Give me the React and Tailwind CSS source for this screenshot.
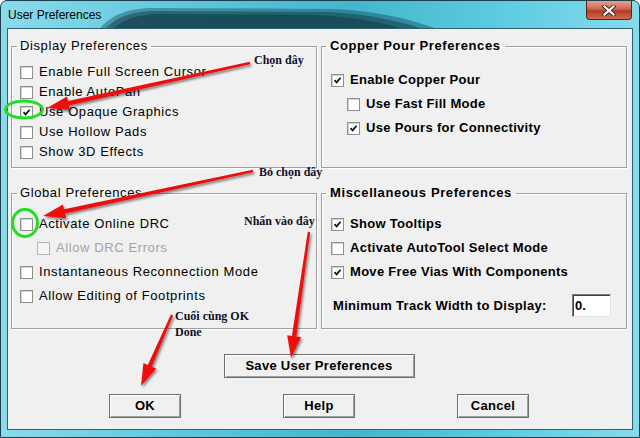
import React from 'react';

function Box({ checked, disabled }) {
  return (
    <span
      className={
        'flex h-[13px] w-[13px] shrink-0 items-center justify-center border ' +
        (disabled
          ? 'border-[#b5b5b5] bg-[#f4f4f4]'
          : 'border-[#8e8f8f] bg-white shadow-[inset_1px_1px_0_#d4d4d4]')
      }
    >
      {checked && (
        <svg width="9" height="9" viewBox="0 0 9 9">
          <path d="M1.5 4.2 L3.6 6.4 L7.6 1.8" fill="none" stroke="#111" strokeWidth="1.7" />
        </svg>
      )}
    </span>
  );
}

function LeftRow({ label, checked, disabled, indent }) {
  return (
    <div className={'flex h-[20px] items-center gap-[6px] ' + (indent ? 'ml-[20px]' : 'ml-[3px]')}>
      <Box checked={checked} disabled={disabled} />
      <span className={'text-[13px] tracking-[0.6px] ' + (disabled ? 'text-[#a3a3a3]' : 'text-black')}>{label}</span>
    </div>
  );
}

function RightRow({ label, checked, indent }) {
  return (
    <div className={'flex h-[24px] items-center gap-[6px] ' + (indent ? 'ml-[21px]' : 'ml-[5px]')}>
      <Box checked={checked} />
      <span className="text-[13px] font-bold tracking-[0.3px]">{label}</span>
    </div>
  );
}

function Group({ title, bold, className, children }) {
  return (
    <fieldset
      className={
        'border border-[#a0a0a0] shadow-[inset_1px_1px_0_#fff,1px_1px_0_#fff] ' +
        (bold ? 'pl-[4px] ' : 'pl-[5px] ') +
        className
      }
    >
      <legend
        className={
          'text-[13px] leading-[14px] ' +
          (bold ? 'px-[4px] font-bold tracking-[0.6px]' : 'px-[3px] tracking-[0.6px]')
        }
      >
        {title}
      </legend>
      {children}
    </fieldset>
  );
}

function Btn({ children, className }) {
  return (
    <button className={'flex h-[24px] items-center justify-center border border-[#6f6f6f] bg-[#f0f0f0] text-[13px] font-bold tracking-[0.3px] shadow-[inset_1px_1px_0_#fff,inset_-1px_-1px_0_#a0a0a0] ' + className}>
      {children}
    </button>
  );
}

function arrow(x1, y1, x2, y2) {
  const dx = x2 - x1;
  const dy = y2 - y1;
  const L = Math.hypot(dx, dy);
  const ux = dx / L;
  const uy = dy / L;
  const nx = -uy;
  const ny = ux;
  const hl = 22;
  const hw = 7;
  const bx = x2 - ux * hl;
  const by = y2 - uy * hl;
  const p = [
    [x1 + nx * 1.2, y1 + ny * 1.2],
    [bx + nx * 2.2, by + ny * 2.2],
    [bx + nx * hw, by + ny * hw],
    [x2, y2],
    [bx - nx * hw, by - ny * hw],
    [bx - nx * 2.2, by - ny * 2.2],
    [x1 - nx * 1.2, y1 - ny * 1.2],
  ];
  return p.map((q) => q[0].toFixed(1) + ',' + q[1].toFixed(1)).join(' ');
}

function Overlay() {
  return (
    <>
      <svg className="pointer-events-none absolute left-0 top-0" width="640" height="438">
        <defs>
          <filter id="sh" x="-20%" y="-20%" width="140%" height="140%">
            <feDropShadow dx="1.5" dy="2" stdDeviation="1.2" floodColor="#000" floodOpacity="0.45" />
          </filter>
        </defs>
        <g fill="#123d49">
          <path d="M100 28 C110 17 124 9 150 8 L335 9 C375 11 405 18 435 28 Z" fillOpacity="0.4" />
          <path d="M106 28 C115 19 128 12 152 11 L328 12 C366 14 395 20 420 28 Z" fillOpacity="0.5" />
          <path d="M114 28 C122 21 134 15 158 14 L318 15 C352 17 378 22 400 28 Z" fillOpacity="0.6" />
        </g>
        <ellipse cx="24" cy="109.5" rx="18.5" ry="8.5" fill="none" stroke="#22dd22" strokeWidth="3" />
        <ellipse cx="25" cy="223" rx="12.5" ry="13.5" fill="none" stroke="#22dd22" strokeWidth="3" />
        <g fill="#ee1111" filter="url(#sh)">
          <polygon points={arrow(250, 63, 47, 108)} />
          <polygon points={arrow(253, 171, 43, 216)} />
          <polygon points={arrow(309, 232, 291, 358)} />
          <polygon points={arrow(172, 315, 141, 386)} />
        </g>
      </svg>
      <div className="pointer-events-none absolute left-[254px] top-[52px] font-['Liberation_Serif',serif] text-[12px] font-bold leading-[16px] text-[#10102a]">Chọn đây</div>
      <div className="pointer-events-none absolute left-[259px] top-[164px] font-['Liberation_Serif',serif] text-[12px] font-bold leading-[16px] text-[#10102a]">Bỏ chọn đây</div>
      <div className="pointer-events-none absolute left-[244px] top-[213px] font-['Liberation_Serif',serif] text-[12px] font-bold leading-[16px] text-[#10102a]">Nhấn vào đây</div>
      <div className="pointer-events-none absolute left-[175px] top-[308px] font-['Liberation_Serif',serif] text-[12px] font-bold leading-[16px] text-[#10102a]">
        Cuối cùng OK
        <br />
        Done
      </div>
    </>
  );
}

export default function App() {
  return (
    <div className="relative h-[438px] w-[640px] overflow-hidden bg-white font-['Liberation_Sans',Arial,sans-serif] text-black">
      <div className="flex h-full w-full flex-col rounded-t-[7px] border border-[#1b3f4b] bg-[linear-gradient(to_right,#8adbea,#5cc6dc_30%,#45b5cd_55%,#5ccbe0_78%,#86dbeb)]">
        <div className="flex h-[27px] items-start justify-between">
          <span className="ml-[7px] mt-[6px] text-[12px] leading-[16px]">User Preferences</span>
          <div className="relative z-10 mr-[7px] flex h-[19px] w-[46px] items-center justify-center rounded-b-[4px] border border-t-0 border-[#5c2219] bg-[linear-gradient(to_bottom,#e4a293,#cf6450_45%,#b63b26_55%,#d36b4e)]">
            <svg width="14" height="11" viewBox="0 0 14 11">
              <path d="M2.5 1.5 L11.5 9.5 M11.5 1.5 L2.5 9.5" stroke="#3a2a28" strokeWidth="4" strokeLinecap="square" />
              <path d="M2.5 1.5 L11.5 9.5 M11.5 1.5 L2.5 9.5" stroke="#fff" strokeWidth="2.2" strokeLinecap="square" />
            </svg>
          </div>
        </div>
        <div className="mx-[6px] mb-[7px] flex flex-1 flex-col border border-[#2d6270] bg-[#f0f0f0] pl-[3px] pr-[5px] pt-[10px]">
          <div className="grid grid-cols-[306px_306px] gap-x-[4px] gap-y-[18px]">
            <Group title="Display Preferences" className="h-[129px]">
              <div className="flex flex-col pt-[9px]">
                <LeftRow label="Enable Full Screen Cursor" />
                <LeftRow label="Enable AutoPan" />
                <LeftRow label="Use Opaque Graphics" checked />
                <LeftRow label="Use Hollow Pads" />
                <LeftRow label="Show 3D Effects" />
              </div>
            </Group>
            <Group title="Copper Pour Preferences" bold className="h-[129px]">
              <div className="flex flex-col pt-[15px]">
                <RightRow label="Enable Copper Pour" checked />
                <RightRow label="Use Fast Fill Mode" indent />
                <RightRow label="Use Pours for Connectivity" checked indent />
              </div>
            </Group>
            <Group title="Global Preferences" className="h-[143px]">
              <div className="flex flex-col pt-[12px]">
                <div className="flex h-[24px] items-center">
                  <LeftRow label="Activate Online DRC" />
                </div>
                <div className="flex h-[24px] items-center">
                  <LeftRow label="Allow DRC Errors" disabled indent />
                </div>
                <div className="flex h-[24px] items-center">
                  <LeftRow label="Instantaneous Reconnection Mode" />
                </div>
                <div className="flex h-[24px] items-center">
                  <LeftRow label="Allow Editing of Footprints" />
                </div>
              </div>
            </Group>
            <Group title="Miscellaneous Preferences" bold className="h-[143px]">
              <div className="flex flex-col pt-[12px]">
                <RightRow label="Show Tooltips" checked />
                <RightRow label="Activate AutoTool Select Mode" />
                <RightRow label="Move Free Vias With Components" checked />
                <div className="ml-[7px] mt-[10px] flex h-[23px] items-center">
                  <span className="w-[239px] text-[13px] font-bold tracking-[0.3px]">Minimum Track Width to Display:</span>
                  <div className="flex h-[23px] w-[39px] items-center border border-[#7a7a7a] border-b-[#e3e3e3] border-r-[#e3e3e3] bg-white pl-[2px] text-[13px] font-bold shadow-[inset_1px_1px_0_#404040]">
                    0.
                  </div>
                </div>
              </div>
            </Group>
          </div>
          <Btn className="mx-auto mt-[25px] w-[191px]">Save User Preferences</Btn>
          <div className="mt-[16px] flex justify-center gap-[102px]">
            <Btn className="w-[72px]">OK</Btn>
            <Btn className="w-[72px]">Help</Btn>
            <Btn className="w-[72px]">Cancel</Btn>
          </div>
        </div>
      </div>
      <Overlay />
    </div>
  );
}
